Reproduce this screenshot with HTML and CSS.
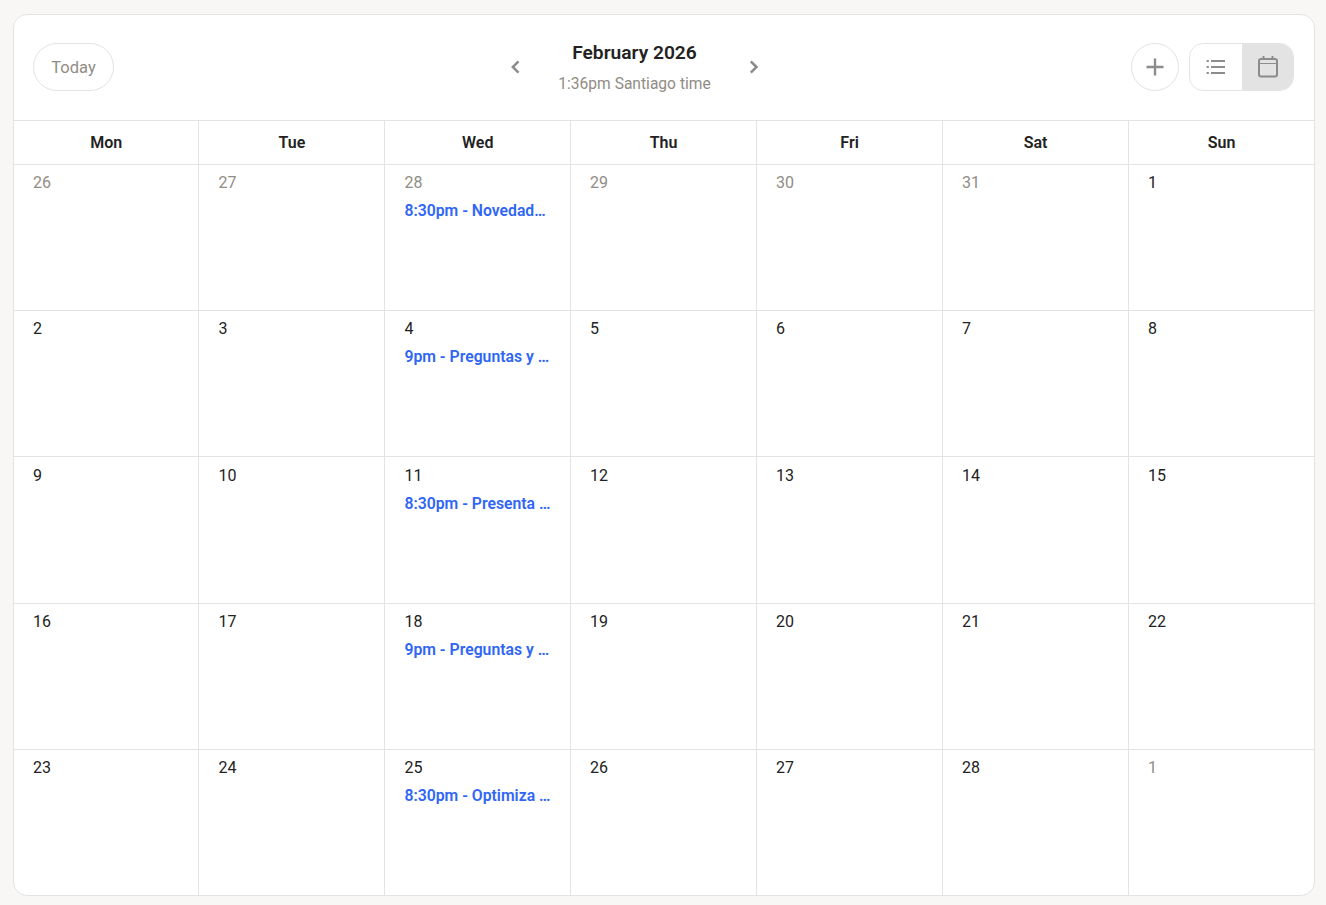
FILE: index.html
```html
<!DOCTYPE html>
<html>
	<head>
		<meta charset="utf-8"/>
		<title>February 2026</title>
		<link rel="stylesheet" href="styles.css">
	</head>
	<body>
		<div class="calendar">
			<div class="toolbar">
				<button class="today">Today</button>
				<div class="month-nav">
					<button class="arrow" aria-label="Previous month">
						<svg width="12" height="16" viewBox="0 0 12 16"><path d="M9.5 2.4 3.8 8l5.7 5.6"/></svg>
					</button>
					<div class="month-title">
						<div class="month-name">February 2026</div>
						<div class="month-time">1:36pm Santiago time</div>
					</div>
					<button class="arrow" aria-label="Next month">
						<svg width="12" height="16" viewBox="0 0 12 16"><path d="M2.8 2.4 8.5 8l-5.7 5.6"/></svg>
					</button>
				</div>
				<div class="actions">
					<button class="add" aria-label="Add event">
						<svg width="18" height="18" viewBox="0 0 18 18"><path d="M9 .5v17M.5 9h17"/></svg>
					</button>
					<div class="view-switch">
						<button class="view" aria-label="List view">
							<svg width="20" height="16" viewBox="0 0 20 16"><path d="M5 2h14M5 8h14M5 14h14M.6 2h2.2M.6 8h2.2M.6 14h2.2"/></svg>
						</button>
						<button class="view active" aria-label="Month view">
							<svg width="20" height="22" viewBox="0 0 20 22"><rect x="1" y="3" width="18" height="17.5" rx="2"/><path class="thin" d="M1 7.5h18"/><path d="M5.5 0v3M14.5 0v3"/></svg>
						</button>
					</div>
				</div>
			</div>
			<div class="weekdays">
				<div class="weekday">Mon</div>
				<div class="weekday">Tue</div>
				<div class="weekday">Wed</div>
				<div class="weekday">Thu</div>
				<div class="weekday">Fri</div>
				<div class="weekday">Sat</div>
				<div class="weekday">Sun</div>
			</div>
			<div class="days">
				<div class="day muted"><span class="num">26</span></div>
				<div class="day muted"><span class="num">27</span></div>
				<div class="day muted"><span class="num">28</span><a class="event">8:30pm - Novedades de la plataforma</a></div>
				<div class="day muted"><span class="num">29</span></div>
				<div class="day muted"><span class="num">30</span></div>
				<div class="day muted"><span class="num">31</span></div>
				<div class="day"><span class="num">1</span></div>

				<div class="day"><span class="num">2</span></div>
				<div class="day"><span class="num">3</span></div>
				<div class="day"><span class="num">4</span><a class="event">9pm - Preguntas y respuestas</a></div>
				<div class="day"><span class="num">5</span></div>
				<div class="day"><span class="num">6</span></div>
				<div class="day"><span class="num">7</span></div>
				<div class="day"><span class="num">8</span></div>

				<div class="day"><span class="num">9</span></div>
				<div class="day"><span class="num">10</span></div>
				<div class="day"><span class="num">11</span><a class="event">8:30pm - Presenta tu proyecto</a></div>
				<div class="day"><span class="num">12</span></div>
				<div class="day"><span class="num">13</span></div>
				<div class="day"><span class="num">14</span></div>
				<div class="day"><span class="num">15</span></div>

				<div class="day"><span class="num">16</span></div>
				<div class="day"><span class="num">17</span></div>
				<div class="day"><span class="num">18</span><a class="event">9pm - Preguntas y respuestas</a></div>
				<div class="day"><span class="num">19</span></div>
				<div class="day"><span class="num">20</span></div>
				<div class="day"><span class="num">21</span></div>
				<div class="day"><span class="num">22</span></div>

				<div class="day"><span class="num">23</span></div>
				<div class="day"><span class="num">24</span></div>
				<div class="day"><span class="num">25</span><a class="event">8:30pm - Optimiza tu perfil</a></div>
				<div class="day"><span class="num">26</span></div>
				<div class="day"><span class="num">27</span></div>
				<div class="day"><span class="num">28</span></div>
				<div class="day muted"><span class="num">1</span></div>
			</div>
		</div>
	</body>
</html>
```

FILE: styles.css
```css
body {
	font-family: Roboto, "Liberation Sans", sans-serif;
	margin: 0;
	padding: 14px 11px 9px 13px;
	background: #f8f7f5;
	color: #222;
}
button {
	font-family: inherit;
	background: none;
	border: 0 none;
	padding: 0;
	cursor: pointer;
}
svg {
	display: block;
	fill: none;
	stroke: #8c8c8c;
	stroke-width: 2;
}
.calendar {
	background: #fff;
	border: 1px solid #e3e3e3;
	border-radius: 14px;
	overflow: hidden;
}
.toolbar {
	height: 104px;
	padding: 0 20px 1px 19px;
	display: grid;
	grid-template-columns: 476px auto 1fr;
	align-items: center;
	border-bottom: 1px solid #e3e3e3;
}
.today {
	justify-self: start;
	width: 81px;
	height: 48px;
	border: 1px solid #e3e3e3;
	border-radius: 24px;
	color: #918c84;
	font-size: 16.5px;
}
.month-nav {
	display: flex;
	align-items: center;
	gap: 30px;
}
.arrow svg {
	stroke-width: 2.5;
}
.month-title {
	width: 167px;
	text-align: center;
}
.month-name {
	font-size: 19.2px;
	font-weight: 600;
	line-height: 24px;
}
.month-time {
	font-size: 15.6px;
	color: #918c84;
	line-height: 20px;
	margin-top: 9px;
}
.actions {
	justify-self: end;
	display: flex;
	gap: 10px;
}
.add {
	width: 48px;
	height: 48px;
	border: 1px solid #e3e3e3;
	border-radius: 50%;
	display: flex;
	align-items: center;
	justify-content: center;
}
.add svg {
	stroke-width: 2.4;
}
.view-switch {
	display: flex;
	box-sizing: border-box;
	width: 105px;
	height: 48px;
	border: 1px solid #e3e3e3;
	border-radius: 14px;
	overflow: hidden;
}
.view {
	flex: 0 0 52px;
	display: flex;
	align-items: center;
	justify-content: center;
}
.view.active {
	flex-basis: 51px;
	padding-left: 1px;
	background: #e3e3e3;
}
.thin {
	stroke-width: 1;
}
.weekdays, .days {
	display: grid;
	grid-template-columns: 185.4px 186px 185.7px repeat(3, 186px) 1fr;
}
.weekdays {
	border-bottom: 1px solid #e3e3e3;
}
.weekday {
	height: 43px;
	line-height: 43px;
	text-align: center;
	font-size: 16px;
	font-weight: 600;
	color: #222;
	border-right: 1px solid #e3e3e3;
}
.weekday:last-child {
	border-right: 0;
}
.days {
	grid-template-rows: repeat(4, 146.2px) 145.2px;
}
.day {
	padding: 8.2px 19px 0 19px;
	border-right: 1px solid #e3e3e3;
	border-bottom: 1px solid #e3e3e3;
	font-size: 16px;
	min-width: 0;
}
.day:nth-child(7n) {
	border-right: 0;
}
.day:nth-last-child(-n+7) {
	border-bottom: 0;
}
.num {
	display: block;
	line-height: 20px;
}
.muted .num {
	color: #918c84;
}
.event {
	display: block;
	margin-top: 8px;
	line-height: 20px;
	font-size: 15.75px;
	color: #2f66f5;
	font-weight: 600;
	white-space: nowrap;
	overflow: hidden;
	text-overflow: ellipsis;
}
```
